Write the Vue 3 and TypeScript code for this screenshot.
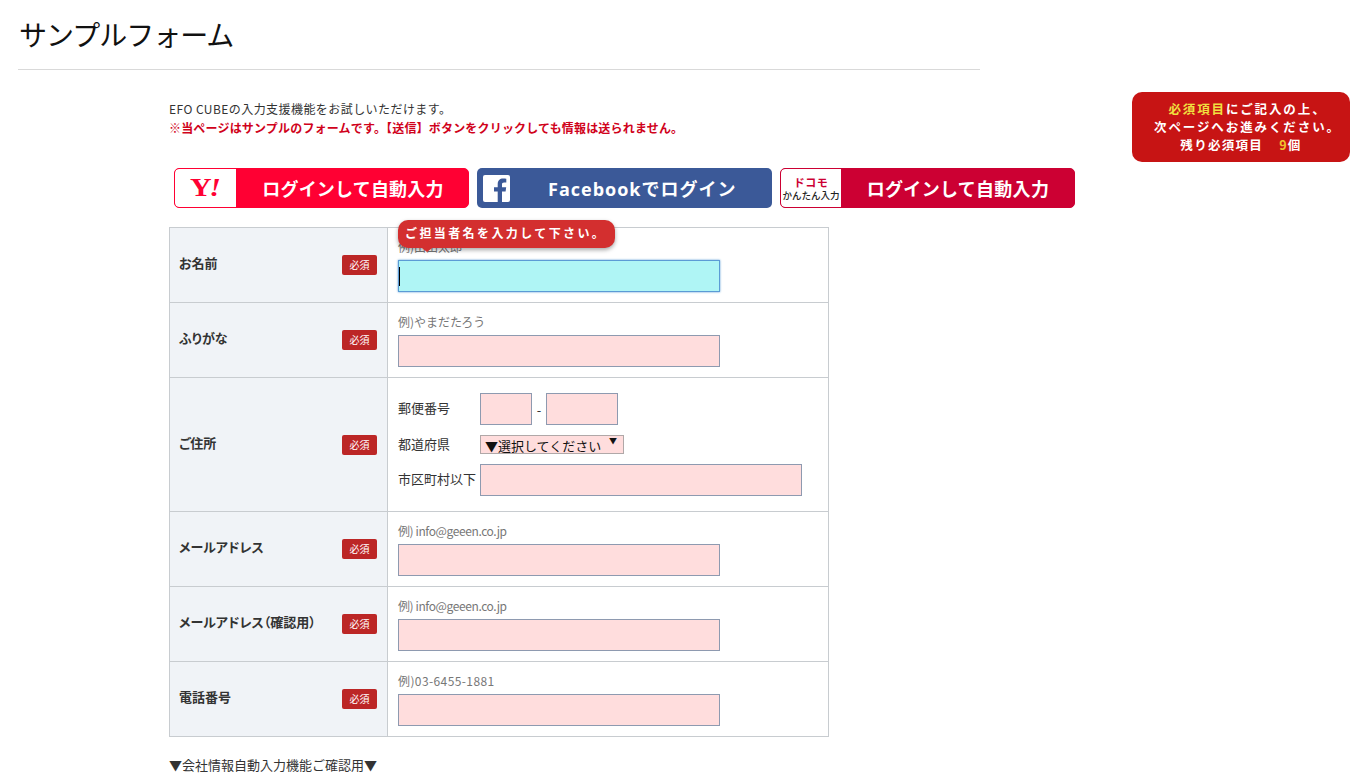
<template>
  <div class="page">
    <h1 class="title">サンプルフォーム</h1>

    <div class="notice">
      <p><span class="req-word">必須項目</span>にご記入の上、</p>
      <p>次ページへお進みください。</p>
      <p class="remain">残り必須項目<span class="count">9</span>個</p>
    </div>

    <div class="content">
      <p class="lead">EFO CUBEの入力支援機能をお試しいただけます。</p>
      <p class="warn">※当ページはサンプルのフォームです。【送信】ボタンをクリックしても情報は送られません。</p>

      <div class="logins">
        <a class="login yahoo">
          <span class="badge-box"><span class="y-logo">Y<em>!</em></span></span>
          <span class="login-text">ログインして自動入力</span>
        </a>
        <a class="login fb">
          <span class="fb-box">
            <svg width="27" height="27" viewBox="0 0 27 27">
              <rect width="27" height="27" rx="2" fill="#fff" />
              <path d="M19 27V16.500h3.600l.6-4.200H19V9.600c0-1.200.4-2.100 2.100-2.100h2.200V3.800c-.4 0-1.700-.2-3.200-.2-3.200 0-5.400 2-5.400 5.500v3.200H11v4.200h3.700V27z" fill="#3b5998" />
            </svg>
          </span>
          <span class="login-text fb-text">Facebookでログイン</span>
        </a>
        <a class="login docomo">
          <span class="badge-box docomo-box">
            <span class="dcm">ドコモ</span>
            <span class="easy">かんたん入力</span>
          </span>
          <span class="login-text">ログインして自動入力</span>
        </a>
      </div>

      <table class="form">
        <tbody>
          <tr v-for="row in rows" :key="row.label">
            <th>
              <div class="th-inner">
                <span class="th-label">{{ row.label }}</span>
                <span class="must">必須</span>
              </div>
            </th>
            <td v-if="row.address" class="address">
              <div class="addr-row">
                <label>郵便番号</label>
                <input class="zip1" type="text" />
                <span class="dash">-</span>
                <input class="zip2" type="text" />
              </div>
              <div class="addr-row pref">
                <label>都道府県</label>
                <span class="select">▼選択してください<i>▼</i></span>
              </div>
              <div class="addr-row">
                <label>市区町村以下</label>
                <input class="city" type="text" />
              </div>
            </td>
            <td v-else class="field">
              <div class="hint" :class="row.hintClass">{{ row.hint }}</div>
              <div class="caret-wrap">
                <input class="text" :class="{ focus: row.active }" type="text" />
                <span v-if="row.active" class="caret"></span>
              </div>
              <div v-if="row.active" class="tip">ご担当者名を入力して下さい。</div>
            </td>
          </tr>
        </tbody>
      </table>

      <p class="after">▼会社情報自動入力機能ご確認用▼</p>
    </div>
  </div>
</template>

<script setup lang="ts">
interface Row {
  label: string
  hint?: string
  hintClass?: string
  address?: boolean
  active?: boolean
}

const rows: Row[] = [
  { label: 'お名前', hint: '例)山田太郎', active: true },
  { label: 'ふりがな', hint: '例)やまだたろう' },
  { label: 'ご住所', address: true },
  { label: 'メールアドレス', hint: '例) info@geeen.co.jp', hintClass: 'tight' },
  { label: 'メールアドレス（確認用）', hint: '例) info@geeen.co.jp', hintClass: 'tight' },
  { label: '電話番号', hint: '例)03-6455-1881', hintClass: 'wide' }
]
</script>

<style>
html,
body {
  margin: 0;
  background: #fff;
  overflow: hidden;
}
</style>

<style scoped>
.page {
  position: relative;
  height: 773px;
  overflow: hidden;
  font-family: "Noto Sans CJK JP", "Liberation Sans", sans-serif;
  color: #333;
}
p {
  margin: 0;
}
.title {
  margin: 0 0 0 18px;
  width: 961px;
  height: 69px;
  border-bottom: 1px solid #d9d9d9;
  padding-left: 1px;
  font-size: 28px;
  font-weight: 400;
  line-height: 68px;
  letter-spacing: -1px;
  color: #111;
}
.notice {
  position: absolute;
  left: 1132px;
  top: 92px;
  width: 218px;
  height: 70px;
  box-sizing: border-box;
  padding: 8px 0 0 13px;
  background: #c71414;
  border-radius: 10px;
  color: #fff;
  font-size: 12.5px;
  font-weight: 700;
  line-height: 18px;
  letter-spacing: 1.9px;
  text-align: center;
}
.req-word {
  color: #f0e040;
}
.remain {
  padding-right: 13px;
  letter-spacing: 1.3px;
}
.count {
  color: #f0c030;
  margin-left: 16px;
}
.content {
  padding: 29px 0 0 169px;
}
.lead {
  font-size: 12px;
  line-height: 19px;
  letter-spacing: 0.44px;
  color: #333;
}
.warn {
  font-size: 12px;
  line-height: 19px;
  font-weight: 700;
  letter-spacing: 0.18px;
  color: #d0021b;
}
.logins {
  display: flex;
  gap: 8px;
  margin: 31px 0 19px 5px;
}
.login {
  display: flex;
  align-items: center;
  width: 295px;
  height: 40px;
  box-sizing: border-box;
  border-radius: 5px;
  overflow: hidden;
  color: #fff;
}
.yahoo {
  background: #ff0033;
  border: 1px solid #ff0033;
}
.fb {
  background: #3b5998;
}
.docomo {
  background: #cc0033;
  border: 1px solid #cc0033;
}
.badge-box {
  flex: none;
  display: flex;
  flex-direction: column;
  align-items: center;
  justify-content: center;
  height: 100%;
  background: #fff;
  border-radius: 4px 0 0 4px;
}
.yahoo .badge-box {
  width: 61px;
}
.y-logo {
  display: inline-block;
  font-family: "Liberation Serif", serif;
  font-size: 26px;
  line-height: 26px;
  font-weight: 700;
  color: #ff0033;
  transform: scaleX(1.15);
}
.y-logo em {
  font-style: italic;
  margin-left: -2px;
}
.docomo-box {
  width: 60px;
}
.dcm {
  font-size: 11px;
  font-weight: 700;
  line-height: 14px;
  color: #cc0033;
  letter-spacing: 0.5px;
}
.easy {
  font-size: 9.5px;
  line-height: 13px;
  color: #222;
  font-weight: 500;
  white-space: nowrap;
}
.fb-box {
  flex: none;
  display: flex;
  width: 66px;
  padding-left: 6px;
  box-sizing: border-box;
}
.login-text {
  flex: 1;
  text-align: center;
  font-size: 18px;
  font-weight: 700;
  letter-spacing: 0.2px;
  padding-left: 2px;
}
.fb-text {
  font-family: "Open Sans", "Noto Sans CJK JP", sans-serif;
  text-align: left;
  letter-spacing: 1px;
  padding-left: 5px;
}
.docomo .login-text {
  padding-left: 1px;
  letter-spacing: 0.3px;
}
.form {
  width: 660px;
  border-collapse: collapse;
  table-layout: fixed;
}
.form th,
.form td {
  border: 1px solid #c8ccd0;
  padding: 0;
}
.form tr {
  height: 75px;
}
.form th {
  width: 217px;
  background: #f0f3f7;
  text-align: left;
  font-size: 13px;
  font-weight: 700;
  font-feature-settings: "palt";
  color: #333;
}
.th-inner {
  display: flex;
  align-items: center;
  justify-content: space-between;
  padding: 0 10px 0 9px;
}
.th-label {
  padding-bottom: 5px;
}
.must {
  width: 35px;
  height: 20px;
  border-radius: 2px;
  background: #bc2626;
  color: #fff;
  font-size: 10px;
  font-weight: 400;
  line-height: 19px;
  text-align: center;
}
.field {
  position: relative;
  padding: 0 10px !important;
  vertical-align: top;
}
.hint {
  margin-top: 9px;
  height: 23px;
  font-size: 12px;
  line-height: 19px;
  color: #777;
}
.hint.tight {
  letter-spacing: -0.4px;
}
.hint.wide {
  letter-spacing: 0.4px;
}
.caret-wrap {
  position: relative;
  width: 322px;
}
input {
  display: block;
  box-sizing: border-box;
  margin: 0;
  padding: 0;
  background: #ffdddd;
  border: 1px solid #8e9ab0;
  outline: none;
}
.text {
  width: 322px;
  height: 32px;
}
.text.focus {
  background: #aff5f5;
  border-color: #5b9bd5;
  box-shadow: 0 0 2px #5b9bd5;
}
.caret {
  position: absolute;
  left: 1px;
  top: 7px;
  width: 1px;
  height: 19px;
  background: #000;
}
.tip {
  position: absolute;
  left: 10px;
  top: -8px;
  width: 217px;
  height: 28px;
  border-radius: 10px;
  background: #d32f2f;
  color: #fff;
  font-size: 12px;
  font-weight: 700;
  line-height: 25px;
  letter-spacing: 2.4px;
  padding-left: 7px;
  box-sizing: border-box;
  white-space: nowrap;
  box-shadow: 0 2px 4px rgba(0, 0, 0, 0.35);
}
.tip::after {
  content: "";
  position: absolute;
  left: 24px;
  top: 28px;
  border: 5px solid transparent;
  border-top: 4px solid #d32f2f;
  border-bottom: 0;
}
.address {
  padding: 15px 10px 15px !important;
  vertical-align: top;
  font-size: 13px;
  color: #333;
}
.addr-row {
  display: flex;
  align-items: center;
}
.addr-row + .addr-row {
  margin-top: 10px;
}
.addr-row label {
  width: 82px;
  flex: none;
  margin-top: -3px;
  white-space: nowrap;
}
.zip1 {
  width: 52px;
  height: 32px;
}
.dash {
  width: 14px;
  text-align: center;
}
.zip2 {
  width: 72px;
  height: 32px;
}
.city {
  width: 322px;
  height: 32px;
}
.select {
  position: relative;
  width: 144px;
  height: 19px;
  box-sizing: border-box;
  border: 1px solid #b0a8a8;
  background: #ffdddd;
  color: #111;
  font-size: 13px;
  line-height: 19px;
  padding-left: 4px;
  white-space: nowrap;
}
.select i {
  position: absolute;
  right: 6px;
  top: -2px;
  font-style: normal;
  font-size: 8px;
  line-height: 14px;
}
.after {
  margin-top: 18px;
  font-size: 13px;
  line-height: 20px;
  color: #333;
}
</style>
